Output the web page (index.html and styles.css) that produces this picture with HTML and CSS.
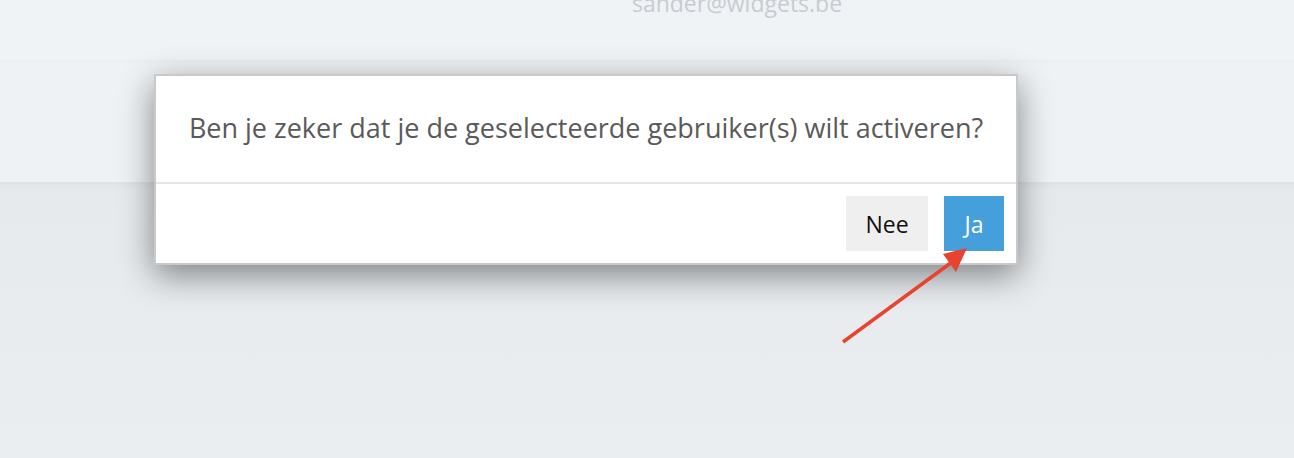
FILE: index.html
```html
<!DOCTYPE html>
<html lang="nl">
<head>
  <meta charset="UTF-8">
  <meta name="viewport" content="width=device-width, initial-scale=1">
  <title>Gebruikers</title>
  <link rel="stylesheet" href="styles.css">
</head>
<body>
<div class="page">
  <div class="profile">
    <div class="profile-email">sander@widgets.be</div>
  </div>
  <div class="toolbar"></div>
  <div class="content"></div>
</div>

<div class="modal">
  <div class="modal-body">Ben je zeker dat je de geselecteerde gebruiker(s) wilt activeren?</div>
  <div class="modal-footer">
    <button class="btn btn-default">Nee</button>
    <button class="btn btn-primary">Ja</button>
  </div>
</div>

<svg class="pointer" width="140" height="110" viewBox="0 0 140 110">
  <line x1="3" y1="102" x2="112" y2="22" stroke="#e8432e" stroke-width="3.5"/>
  <polygon points="127,8 103,14 116,32" fill="#e8432e"/>
</svg>
</body>
</html>
```

FILE: styles.css
```css
html, body {
  margin: 0;
  height: 100%;
}

body {
  font-family: "Open Sans", "Liberation Sans", sans-serif;
  background: #eaedf0;
  overflow: hidden;
  position: relative;
}

.page {
  display: flex;
  flex-direction: column;
  height: 100%;
}

.profile {
  height: 60px;
  background: #eff3f6;
  display: flex;
  justify-content: center;
}

.profile-email {
  margin-top: -12px;
  margin-left: 180px;
  font-size: 23px;
  line-height: 30px;
  color: #c7ccd1;
}

.toolbar {
  height: 122px;
  background: linear-gradient(#eaeef1 0, #eef2f5 4px, #eef2f5 100%);
}

.content {
  flex: 1;
  background: linear-gradient(#dfe3e6 0, #e6eaed 8px, #ebeef1 100%);
}

.modal {
  position: absolute;
  left: 154px;
  top: 74px;
  width: 860px;
  background: #fff;
  border: 2px solid #c9c9c9;
  box-shadow: 0 10px 32px rgba(0, 0, 0, 0.45);
}

.modal-body {
  height: 106px;
  display: flex;
  align-items: center;
  justify-content: center;
  font-size: 27px;
  color: #5a5a5a;
  padding-bottom: 4px;
  box-sizing: border-box;
  white-space: nowrap;
}

.modal-footer {
  border-top: 2px solid #e6e6e6;
  padding: 12px;
  display: flex;
  justify-content: flex-end;
  gap: 16px;
}

.btn {
  height: 55px;
  border: 0;
  font-family: inherit;
  font-size: 23px;
  padding: 0;
}

.btn-default {
  width: 82px;
  background: #efefef;
  color: #111;
}

.btn-primary {
  width: 60px;
  background: #449fdb;
  color: #fff;
}

.pointer {
  position: absolute;
  left: 840px;
  top: 240px;
}
```
